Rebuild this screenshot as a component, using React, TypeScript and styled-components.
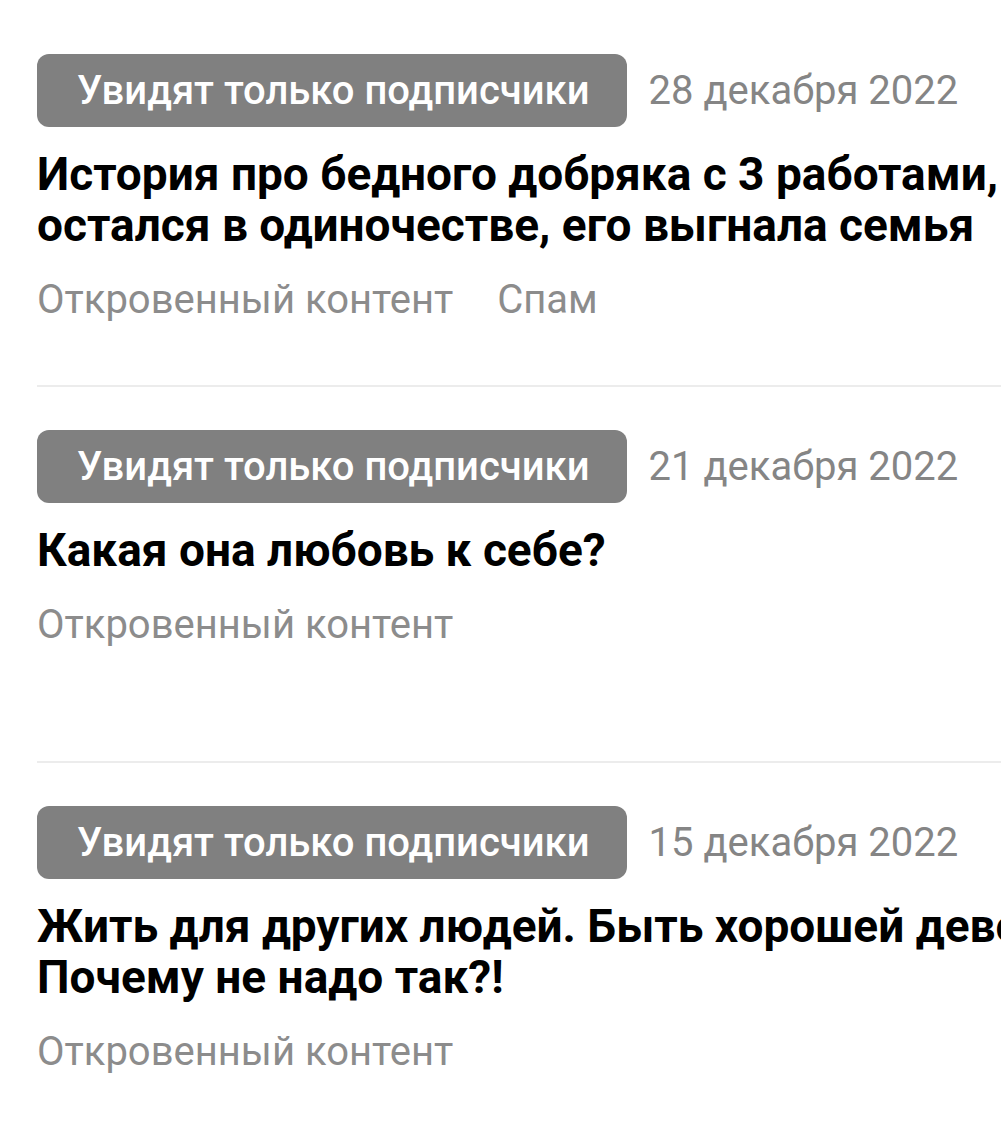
import styled, { createGlobalStyle } from 'styled-components';

interface Post {
  id: number;
  date: string;
  // title lines as the feed lays them out
  title: string[];
  tags: string[];
}

const posts: Post[] = [
  {
    id: 1,
    date: '28 декабря 2022',
    title: ['История про бедного добряка с 3 работами,', 'остался в одиночестве, его выгнала семья'],
    tags: ['Откровенный контент', 'Спам'],
  },
  {
    id: 2,
    date: '21 декабря 2022',
    title: ['Какая она любовь к себе?'],
    tags: ['Откровенный контент'],
  },
  {
    id: 3,
    date: '15 декабря 2022',
    title: ['Жить для других людей. Быть хорошей девочкой.', 'Почему не надо так?!'],
    tags: ['Откровенный контент'],
  },
];

const GlobalStyle = createGlobalStyle`
  html, body {
    margin: 0;
    padding: 0;
    background: #ffffff;
    overflow-x: hidden;
  }
  body {
    font-family: Roboto, "Noto Sans", "Liberation Sans", sans-serif;
    -webkit-font-smoothing: antialiased;
  }
`;

const List = styled.div`
  width: 1080px;
  box-sizing: border-box;
  padding: 11px 0 0 37px;
  display: flex;
  flex-direction: column;
`;

const Item = styled.article`
  min-height: 331px;
  padding-top: 43px;
  border-bottom: 2px solid #ececec;
  display: flex;
  flex-direction: column;
`;

const Meta = styled.div`
  display: flex;
  align-items: center;
  gap: 22px;
`;

const Badge = styled.span`
  display: inline-flex;
  align-items: center;
  height: 73px;
  padding: 0 37px 0 40px;
  border-radius: 12px;
  background: #808080;
  color: #ffffff;
  font-size: 40px;
  font-weight: 500;
  white-space: nowrap;
`;

const DateText = styled.span`
  color: #858585;
  font-size: 40px;
  white-space: nowrap;
`;

const Title = styled.h2`
  margin: 22px 0 0;
  font-size: 46px;
  line-height: 51px;
  font-weight: 700;
  color: #000000;
  white-space: nowrap;
`;

const Tags = styled.div`
  display: flex;
  gap: 44px;
  margin-top: 26px;
`;

const Tag = styled.span`
  color: #8c8c8c;
  font-size: 40px;
  line-height: 46px;
`;

export default function App() {
  return (
    <>
      <GlobalStyle />
      <List>
        {posts.map(post => (
          <Item key={post.id}>
            <Meta>
              <Badge>Увидят только подписчики</Badge>
              <DateText>{post.date}</DateText>
            </Meta>
            <Title>
              {post.title.map((line, i) => (
                <span key={i}>
                  {i > 0 && <br />}
                  {line}
                </span>
              ))}
            </Title>
            <Tags>
              {post.tags.map(tag => (
                <Tag key={tag}>{tag}</Tag>
              ))}
            </Tags>
          </Item>
        ))}
      </List>
    </>
  );
}
